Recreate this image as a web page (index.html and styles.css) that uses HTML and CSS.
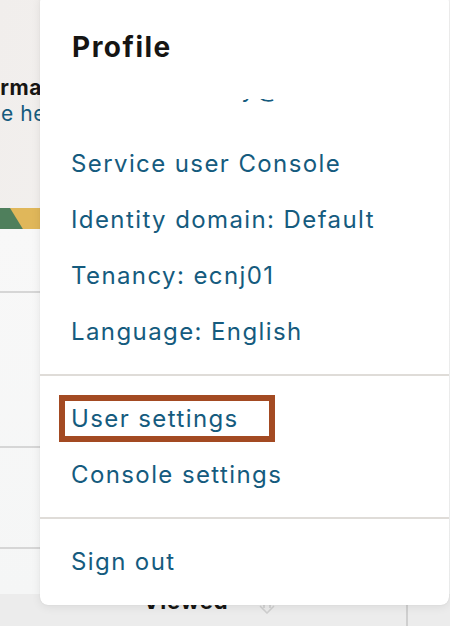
FILE: index.html
```html
<!DOCTYPE html>
<html lang="en">
<head>
<meta charset="utf-8">
<title>Profile menu</title>
<link rel="stylesheet" href="styles.css">
</head>
<body>
<div class="page">
  <section class="hero">
    <div class="hero-title">Information</div>
    <div class="hero-link">See help</div>
    <div class="hero-bar"><span class="bar-yellow"></span></div>
  </section>
  <section class="list">
    <div class="list-row"></div>
    <div class="list-row tall"></div>
    <div class="list-row short"></div>
    <div class="list-row last"></div>
  </section>
  <section class="table-head">
    <span class="th-label">Viewed</span>
    <svg class="sort-icon" width="18" height="14" viewBox="0 0 18 14"><path d="M6 1v7M12 1v7M2 6l7 7 7-7" fill="none" stroke="#cfcfcf" stroke-width="1.6"/></svg>
    <span class="th-sep"></span>
  </section>
</div>

<div class="menu">
  <div class="menu-head">
    <div class="menu-title">Profile</div>
    <div class="menu-email"><span class="email-text">subhitra.reddy@oracle.com</span><span class="email-mask"></span></div>
  </div>
  <div class="menu-group first">
    <a class="menu-item">Service user Console</a>
    <a class="menu-item">Identity domain: Default</a>
    <a class="menu-item">Tenancy: ecnj01</a>
    <a class="menu-item">Language: English</a>
  </div>
  <div class="menu-group">
    <a class="menu-item"><span class="highlight">User settings</span></a>
    <a class="menu-item">Console settings</a>
  </div>
  <div class="menu-group last">
    <a class="menu-item">Sign out</a>
  </div>
</div>
</body>
</html>
```

FILE: styles.css
```css
html, body {
  margin: 0;
  padding: 0;
}
body {
  width: 450px;
  height: 626px;
  overflow: hidden;
  position: relative;
  font-family: "Inter", "Noto Sans", sans-serif;
  background: #f6f6f6;
}
.page {
  display: flex;
  flex-direction: column;
  height: 626px;
}
.hero {
  height: 229px;
  background: linear-gradient(100deg, #f1eeec 0%, #f4f2f1 60%, #f7f7f7 100%);
  position: relative;
  overflow: hidden;
}
.hero-title {
  margin: 75px 0 0 -42px;
  font-size: 21px;
  font-weight: 700;
  color: #161513;
  line-height: 25px;
  letter-spacing: 0.6px;
  white-space: nowrap;
}
.hero-link {
  margin: 1px 0 0 -26px;
  font-size: 21px;
  color: #155b7e;
  line-height: 25px;
  letter-spacing: 0.6px;
  white-space: nowrap;
}
.hero-bar {
  margin-top: 82px;
  height: 22px;
  width: 40px;
  background: #4f7f5c;
  position: relative;
  overflow: hidden;
}
.bar-yellow {
  position: absolute;
  right: 0;
  top: 0;
  width: 30px;
  height: 22px;
  background: #e0b75a;
  clip-path: polygon(0 0, 100% 0, 100% 100%, 45% 100%);
}
.list {
  flex: 1;
  background: linear-gradient(180deg, #f8f8f8, #f5f6f6);
  display: flex;
  flex-direction: column;
}
.list-row {
  height: 62px;
  border-bottom: 2px solid #d6d6d6;
  width: 40px;
}
.list-row.tall { height: 153px; }
.list-row.short { height: 99px; }
.list-row.last { height: 45px; border-bottom: none; }
.table-head {
  height: 32px;
  background: #ececec;
  display: flex;
  align-items: flex-start;
  position: relative;
}
.th-label {
  margin-left: 143px;
  margin-top: -8px;
  font-size: 22px;
  font-weight: 700;
  color: #161513;
  line-height: 30px;
  letter-spacing: 0.8px;
}
.sort-icon {
  margin-left: 30px;
  margin-top: 6px;
}
.th-sep {
  position: absolute;
  left: 406px;
  top: 0;
  width: 2px;
  height: 32px;
  background: #cfcfcf;
}

/* Menu overlay */
.menu {
  position: absolute;
  left: 40px;
  top: -6px;
  width: 409px;
  height: 611px;
  background: #ffffff;
  border-radius: 8px;
  box-shadow: 0 2px 10px rgba(0, 0, 0, 0.08), 0 0 1px rgba(0, 0, 0, 0.15);
  display: flex;
  flex-direction: column;
}
.menu-head {
  padding: 37px 0 0 32px;
}
.menu-title {
  font-size: 28px;
  font-weight: 700;
  color: #161513;
  line-height: 32px;
  letter-spacing: 1.5px;
}
.menu-email {
  position: relative;
  margin-top: 11px;
  height: 30px;
  font-size: 24px;
  line-height: 30px;
  letter-spacing: 1.4px;
  color: #155b7e;
  white-space: nowrap;
  overflow: hidden;
}
.email-mask {
  position: absolute;
  left: -4px;
  right: 0;
  top: 0;
  height: 25px;
  background: #ffffff;
}
.menu-group {
  display: flex;
  flex-direction: column;
  padding: 15px 0 14px;
  border-bottom: 2px solid #dfdcd8;
}
.menu-group.first {
  padding-top: 32px;
}
.menu-group.last {
  border-bottom: none;
}
.menu-item {
  display: block;
  height: 56px;
  line-height: 56px;
  padding-left: 31px;
  font-size: 24px;
  letter-spacing: 1.4px;
  color: #155b7e;
  white-space: nowrap;
}
.highlight {
  position: relative;
  display: inline-block;
}
.highlight::after {
  content: "";
  position: absolute;
  left: -12px;
  right: -36px;
  top: 4px;
  bottom: 5px;
  border: 6px solid #a34a22;
}
```
